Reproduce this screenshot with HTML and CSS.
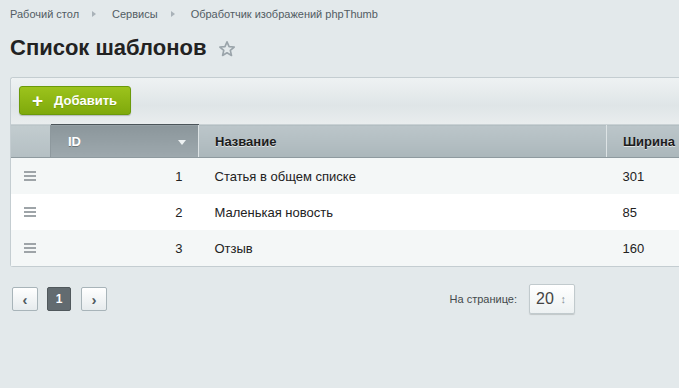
FILE: index.html
```html
<!DOCTYPE html>
<html lang="ru">
<head>
  <meta charset="UTF-8">
  <title>Список шаблонов</title>
  <link rel="stylesheet" href="styles.css">
</head>
<body>

<div class="breadcrumbs">
  <a href="#">Рабочий стол</a>
  <span class="crumb-arrow"></span>
  <a href="#">Сервисы</a>
  <span class="crumb-arrow"></span>
  <a href="#">Обработчик изображений phpThumb</a>
</div>

<h1 class="page-title">
  Список шаблонов
  <svg class="star" width="18" height="18" viewBox="0 0 24 24">
    <path d="M12 2.5l2.8 6.3 6.8.6-5.2 4.5 1.6 6.7L12 17.1l-5.9 3.5 1.6-6.7-5.2-4.5 6.8-.6z" fill="none" stroke="#9aa4aa" stroke-width="2.2" stroke-linejoin="round"/>
  </svg>
</h1>

<div class="panel">
  <div class="toolbar">
    <button class="btn-add"><span class="plus">+</span>Добавить</button>
  </div>
  <table class="grid">
    <thead>
      <tr>
        <th class="col-drag"></th>
        <th class="col-id sorted">ID <span class="sort-arrow"></span></th>
        <th class="col-name">Название</th>
        <th class="col-width">Ширина</th>
      </tr>
    </thead>
    <tbody>
      <tr>
        <td class="col-drag"><span class="drag"></span></td>
        <td class="col-id">1</td>
        <td>Статья в общем списке</td>
        <td>301</td>
      </tr>
      <tr>
        <td class="col-drag"><span class="drag"></span></td>
        <td class="col-id">2</td>
        <td>Маленькая новость</td>
        <td>85</td>
      </tr>
      <tr>
        <td class="col-drag"><span class="drag"></span></td>
        <td class="col-id">3</td>
        <td>Отзыв</td>
        <td>160</td>
      </tr>
    </tbody>
  </table>
</div>

<div class="pager">
  <div class="pages">
    <a class="page-btn" href="#">&#8249;</a>
    <span class="page-btn current">1</span>
    <a class="page-btn" href="#">&#8250;</a>
  </div>
  <div class="per-page">
    <span class="per-page-label">На странице:</span>
    <div class="select">20 <span class="select-arrows">&#8597;</span></div>
  </div>
</div>

</body>
</html>
```

FILE: styles.css
```css
html, body {
  overflow: hidden;
}

body {
  margin: 0;
  width: 679px;
  height: 388px;
  background-color: #e3e9eb;
  font-family: "Liberation Sans", Arial, sans-serif;
  color: #000;
}

.breadcrumbs {
  display: flex;
  align-items: center;
  height: 14px;
  padding: 7px 0 0 10px;
  font-size: 11px;
}

.breadcrumbs a {
  color: #525c63;
  text-decoration: none;
}

.crumb-arrow {
  width: 0;
  height: 0;
  margin: 0 16px 0 13px;
  border-top: 3px solid transparent;
  border-bottom: 3px solid transparent;
  border-left: 4px solid #a9b2b8;
}

.page-title {
  display: flex;
  align-items: center;
  gap: 11px;
  margin: 14px 0 0 10px;
  height: 26px;
  font-size: 22px;
  font-weight: bold;
  color: #222;
}

.star {
  margin-top: 2px;
}

.panel {
  width: 760px;
  margin: 16px 0 0 10px;
  border: 1px solid #c4cdd1;
  border-right: none;
  border-radius: 3px 0 0 3px;
  background: #fff;
}

.toolbar {
  height: 46px;
  padding: 8px 0 0 8px;
  box-sizing: border-box;
  background: linear-gradient(#eef2f3, #dfe5e7 60%, #e9edee);
  border-radius: 3px 0 0 0;
}

.btn-add {
  display: flex;
  align-items: center;
  height: 29px;
  padding: 0 13px 0 12px;
  border: 1px solid #6b9a0a;
  border-radius: 3px;
  background: linear-gradient(#9cc31c, #7fa90c);
  box-shadow: 0 1px 1px rgba(0, 0, 0, 0.2);
  font-family: "Liberation Sans", Arial, sans-serif;
  font-size: 13px;
  font-weight: bold;
  color: #fff;
  text-shadow: 0 1px 0 rgba(0, 0, 0, 0.15);
}

.plus {
  margin-right: 11px;
  font-size: 19px;
  line-height: 1;
  font-weight: bold;
}

.grid {
  width: 100%;
  border-collapse: collapse;
  font-size: 13px;
}

.grid th {
  height: 32px;
  padding: 0 0 0 16px;
  text-align: left;
  font-weight: bold;
  color: #1c1c1c;
  text-shadow: 0 1px 0 rgba(255, 255, 255, 0.6);
  background: linear-gradient(#bcc6ca, #abb7bb);
  border-top: 1px solid #c9d1d4;
  border-bottom: 1px solid #8e9a9f;
  border-left: 1px solid #dde3e5;
}

.grid th.col-drag {
  width: 39px;
  padding: 0;
  border-left: none;
  background: linear-gradient(#c2cccf, #b4bfc3);
}

.grid th.col-id {
  width: 148px;
  padding-left: 17px;
  box-sizing: border-box;
  position: relative;
}

.grid th.sorted {
  color: #fff;
  text-shadow: 0 1px 0 rgba(0, 0, 0, 0.3);
  background: linear-gradient(#8b969b, #9ea9ae);
  border-top: 1px solid #4c555a;
  border-left: 1px solid #8e999e;
}

.sort-arrow {
  position: absolute;
  right: 12px;
  top: 15px;
  width: 0;
  height: 0;
  border-left: 4px solid transparent;
  border-right: 4px solid transparent;
  border-top: 5px solid #eef2f3;
}

.grid th.col-name {
  width: 391px;
}

.grid td {
  height: 36px;
  padding: 0 0 0 16px;
  font-size: 13px;
  color: #222;
}

.grid tbody tr:nth-child(odd) td {
  background-color: #f4f7f7;
}

.grid td.col-drag {
  padding: 0 0 0 13px;
}

.grid td.col-id {
  text-align: right;
  padding: 0 16px 0 0;
}

.drag {
  display: block;
  width: 12px;
  height: 2px;
  background: #9ea4a8;
  box-shadow: 0 4px 0 #9ea4a8, 0 -4px 0 #9ea4a8;
}

.pager {
  display: flex;
  align-items: center;
  justify-content: space-between;
  width: 563px;
  margin: 17px 0 0 12px;
}

.pages {
  display: flex;
  gap: 9px;
}

.page-btn {
  display: flex;
  align-items: center;
  justify-content: center;
  width: 24px;
  height: 22px;
  border: 1px solid #a8b4b9;
  border-radius: 2px;
  background: linear-gradient(#ffffff, #e6ebed);
  font-size: 15px;
  font-weight: bold;
  color: #4f5a60;
  text-decoration: none;
}

.page-btn.current {
  width: 22px;
  margin-right: 1px;
  border-color: #50585c;
  background: #626b70;
  color: #fff;
  font-size: 12px;
}

.per-page {
  display: flex;
  align-items: center;
  gap: 12px;
}

.per-page-label {
  font-size: 11px;
  color: #44494c;
}

.select {
  display: flex;
  align-items: center;
  justify-content: space-between;
  width: 46px;
  height: 30px;
  padding: 0 8px 0 6px;
  box-sizing: border-box;
  border: 1px solid #c1cacd;
  border-radius: 2px;
  background: linear-gradient(#ffffff, #edf1f2);
  box-shadow: 0 1px 1px rgba(0, 0, 0, 0.15);
  font-size: 16px;
  color: #444;
}

.select-arrows {
  font-size: 11px;
  color: #8a949a;
}
```
